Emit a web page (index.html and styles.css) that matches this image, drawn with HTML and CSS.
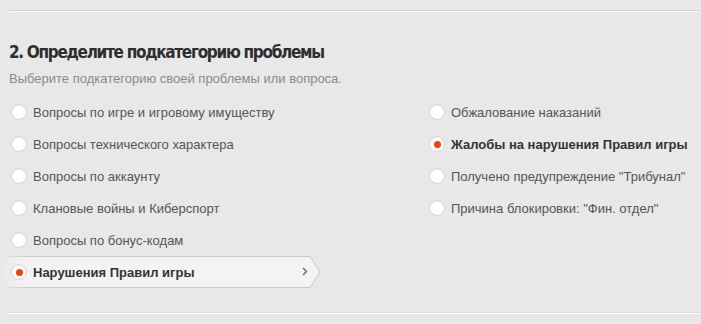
FILE: index.html
```html
<!DOCTYPE html>
<html lang="ru">
  <head>
    <meta charset="UTF-8" />
    <meta name="viewport" content="width=device-width, initial-scale=1.0" />
    <title>Подкатегория проблемы</title>
    <link rel="stylesheet" href="styles.css">
  </head>
  <body>
    <div class="section">
      <div class="rule"></div>
      <h2 class="title">2. Определите подкатегорию проблемы</h2>
      <p class="hint">Выберите подкатегорию своей проблемы или вопроса.</p>

      <div class="columns">
        <ul class="options options-left">
          <li class="option"><span class="radio"></span>Вопросы по игре и игровому имуществу</li>
          <li class="option"><span class="radio"></span>Вопросы технического характера</li>
          <li class="option"><span class="radio"></span>Вопросы по аккаунту</li>
          <li class="option"><span class="radio"></span>Клановые войны и Киберспорт</li>
          <li class="option"><span class="radio"></span>Вопросы по бонус-кодам</li>
          <li class="option option-current">
            <svg class="tab" width="322" height="32" viewBox="0 0 322 32">
              <defs>
                <linearGradient id="fade" x1="0" x2="1" y1="0" y2="0">
                  <stop offset="0" stop-color="#f3f3f3" stop-opacity="0" />
                  <stop offset="0.08" stop-color="#f3f3f3" stop-opacity="1" />
                  <stop offset="1" stop-color="#f3f3f3" stop-opacity="1" />
                </linearGradient>
                <linearGradient id="edge" x1="0" x2="1" y1="0" y2="0">
                  <stop offset="0" stop-color="#c8c8c8" stop-opacity="0" />
                  <stop offset="0.09" stop-color="#c8c8c8" stop-opacity="1" />
                  <stop offset="1" stop-color="#c8c8c8" stop-opacity="1" />
                </linearGradient>
              </defs>
              <polygon points="0,0.5 310,0.5 320,16 310,31.5 0,31.5" fill="url(#fade)" />
              <polyline points="0,0.5 310,0.5 320,16 310,31.5 0,31.5" fill="none" stroke="url(#edge)" stroke-width="1" />
            </svg>
            <span class="radio checked"></span><b>Нарушения Правил игры</b>
            <svg class="chevron" width="6" height="9" viewBox="0 0 6 9">
              <polyline points="1,1 4.5,4.5 1,8" fill="none" stroke="#666" stroke-width="1.4" />
            </svg>
          </li>
        </ul>
        <ul class="options options-right">
          <li class="option"><span class="radio"></span>Обжалование наказаний</li>
          <li class="option"><span class="radio checked"></span><b>Жалобы на нарушения Правил игры</b></li>
          <li class="option"><span class="radio"></span>Получено предупреждение "Трибунал"</li>
          <li class="option"><span class="radio"></span>Причина блокировки: "Фин. отдел"</li>
        </ul>
      </div>

      <div class="rule rule-bottom"></div>
    </div>
  </body>
</html>
```

FILE: styles.css
```css
* {
  margin: 0;
  padding: 0;
  box-sizing: border-box;
}

body {
  background-color: #e8e8e8;
  font-family: "Liberation Sans", Arial, sans-serif;
  font-size: 13px;
  color: #555;
}

.section {
  width: 701px;
  height: 324px;
  padding-top: 10px;
}

.rule {
  margin-left: 9px;
  height: 2px;
  border-top: 1px solid #d3d3d3;
  border-bottom: 1px solid #fafafa;
}

.rule-bottom {
  margin-left: 7px;
  margin-top: 24px;
  border-top: 1px solid #dcdcdc;
  border-bottom: 1px solid #ffffff;
}

.title {
  margin: 29px 0 0 9px;
  font-family: "DejaVu Sans Condensed", "DejaVu Sans", sans-serif;
  font-weight: bold;
  font-size: 17px;
  line-height: 22px;
  letter-spacing: -1.3px;
  color: #2e2e2e;
}

.hint {
  margin: 8px 0 0 9px;
  line-height: 16px;
  color: #8a8a8a;
}

.columns {
  display: flex;
  margin-top: 9px;
}

.options {
  list-style: none;
}

.options-left {
  flex-shrink: 0;
  width: 418px;
}

.options-right {
  flex: 1;
}

.option {
  position: relative;
  display: flex;
  align-items: center;
  height: 32px;
  padding-left: 11px;
  white-space: nowrap;
}

.options-left .option {
  width: 322px;
}

.option b {
  position: relative;
  color: #333;
}

.tab {
  position: absolute;
  left: 0;
  top: 0;
}

.chevron {
  position: absolute;
  left: 302px;
  top: 11px;
}

.radio {
  position: relative;
  flex-shrink: 0;
  width: 16px;
  height: 16px;
  margin-right: 6px;
  border-radius: 50%;
  border: 1px solid #d6d6d6;
  background: #fff;
  box-shadow: inset 0 1px 1px rgba(0, 0, 0, 0.08);
}

.radio.checked::after {
  content: "";
  position: absolute;
  left: 3.5px;
  top: 3.5px;
  width: 7px;
  height: 7px;
  border-radius: 50%;
  background: #f24400;
}
```
